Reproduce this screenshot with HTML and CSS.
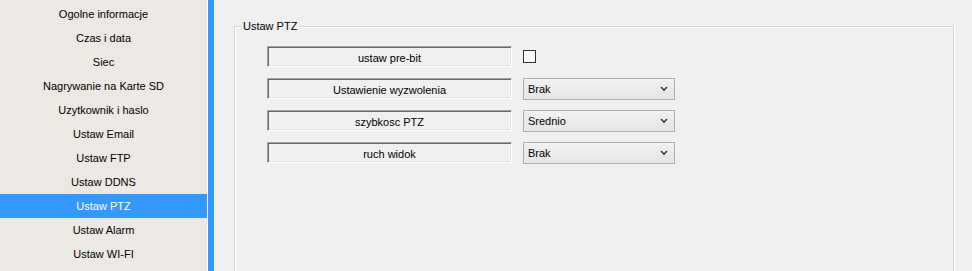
FILE: index.html
```html
<!DOCTYPE html>
<html lang="pl">
<head>
<meta charset="utf-8">
<title>Ustaw PTZ</title>
<link rel="stylesheet" href="styles.css">
</head>
<body>
<div class="app">
  <nav class="sidebar">
    <div class="item">Ogolne informacje</div>
    <div class="item">Czas i data</div>
    <div class="item">Siec</div>
    <div class="item">Nagrywanie na Karte SD</div>
    <div class="item">Uzytkownik i haslo</div>
    <div class="item">Ustaw Email</div>
    <div class="item">Ustaw FTP</div>
    <div class="item">Ustaw DDNS</div>
    <div class="item active">Ustaw PTZ</div>
    <div class="item">Ustaw Alarm</div>
    <div class="item">Ustaw WI-FI</div>
  </nav>
  <div class="divider"></div>
  <main class="content">
    <section class="group">
      <span class="legend">Ustaw PTZ</span>
      <div class="rows">
        <div class="row">
          <div class="label">ustaw pre-bit</div>
          <span class="check"></span>
        </div>
        <div class="row">
          <div class="label">Ustawienie wyzwolenia</div>
          <div class="combo"><span>Brak</span><svg class="chev" width="8" height="6" viewBox="0 0 8 6"><polyline points="1,1 4,4 7,1" fill="none" stroke="#3a3a3a" stroke-width="1.6"/></svg></div>
        </div>
        <div class="row">
          <div class="label">szybkosc PTZ</div>
          <div class="combo"><span>Srednio</span><svg class="chev" width="8" height="6" viewBox="0 0 8 6"><polyline points="1,1 4,4 7,1" fill="none" stroke="#3a3a3a" stroke-width="1.6"/></svg></div>
        </div>
        <div class="row">
          <div class="label">ruch widok</div>
          <div class="combo"><span>Brak</span><svg class="chev" width="8" height="6" viewBox="0 0 8 6"><polyline points="1,1 4,4 7,1" fill="none" stroke="#3a3a3a" stroke-width="1.6"/></svg></div>
        </div>
      </div>
    </section>
  </main>
</div>
</body>
</html>
```

FILE: styles.css
```css
html, body {
  margin: 0;
  padding: 0;
}

body {
  background: #f0f0f0;
  font-family: "Liberation Sans", Arial, sans-serif;
  font-size: 11px;
  color: #000;
  overflow: hidden;
}

.app {
  display: flex;
  height: 271px;
  overflow: hidden;
}

.sidebar {
  width: 208px;
  box-sizing: border-box;
  background: #ece8e4;
  border-right: 1px solid #ffffff;
  padding-top: 2px;
  flex: none;
}

.item {
  height: 24px;
  line-height: 24px;
  text-align: center;
  white-space: nowrap;
}

.item.active {
  background: #3399ff;
  color: #ffffff;
}

.divider {
  width: 6px;
  flex: none;
  background: #3197f8;
}

.content {
  flex: 1;
  padding: 26px 18px 0 20px;
  min-width: 0;
  overflow: hidden;
}

.group {
  position: relative;
  height: 260px;
  border: 1px solid #d5d5d5;
  box-shadow: inset 1px 1px #ffffff, 1px 0 #ffffff;
  padding: 19px 0 0 32px;
}

.legend {
  position: absolute;
  top: -7px;
  left: 7px;
  padding: 0 1px;
  line-height: 13px;
  background: #f0f0f0;
}

.rows {
  display: flex;
  flex-direction: column;
  gap: 10px;
}

.row {
  display: flex;
  align-items: flex-start;
  gap: 11px;
}

.row:first-child {
  margin-bottom: 1px;
}

.label {
  width: 245px;
  height: 21px;
  box-sizing: border-box;
  border: 1px solid;
  border-color: #a0a0a0 #ffffff #ffffff #a0a0a0;
  box-shadow: inset 1px 1px #696969, inset -1px -1px #e3e3e3;
  text-align: center;
  line-height: 20px;
  padding-top: 1px;
}

.check {
  width: 13px;
  height: 13px;
  box-sizing: border-box;
  margin-top: 4px;
  border: 1px solid #333333;
  background: #fbfbfb;
}

.combo {
  width: 152px;
  height: 22px;
  box-sizing: border-box;
  border: 1px solid #acacac;
  background: linear-gradient(#f2f2f2, #e5e5e5);
  display: flex;
  align-items: center;
  justify-content: space-between;
  padding: 0 6px 0 4px;
}

.chev {
  display: block;
}
```
